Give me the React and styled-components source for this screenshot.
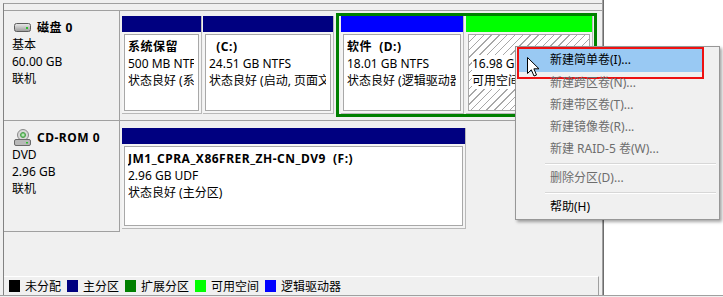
import styled, { createGlobalStyle } from "styled-components";

const GlobalStyle = createGlobalStyle`
  body {
    margin: 0;
    background: #f0f0f0;
    font-family: "Noto Sans", "Noto Sans CJK SC", sans-serif;
    font-size: 12px;
    color: #000;
  }
  * { box-sizing: border-box; }
`;

const legend = [
  { color: "#000000", label: "未分配" },
  { color: "#000080", label: "主分区" },
  { color: "#008000", label: "扩展分区" },
  { color: "#00ff00", label: "可用空间" },
  { color: "#0000ff", label: "逻辑驱动器" },
];

const menu = [
  { label: "新建简单卷(I)...", active: true },
  { label: "新建跨区卷(N)...", disabled: true },
  { label: "新建带区卷(T)...", disabled: true },
  { label: "新建镜像卷(R)...", disabled: true },
  { label: "新建 RAID-5 卷(W)...", disabled: true },
  { sep: true },
  { label: "删除分区(D)...", disabled: true },
  { sep: true },
  { label: "帮助(H)" },
];

function DiskIcon() {
  return (
    <svg width="17" height="9" viewBox="0 0 17 9">
      <defs>
        <linearGradient id="dk" x1="0" y1="0" x2="0" y2="1">
          <stop offset="0" stopColor="#ececec" />
          <stop offset="1" stopColor="#9a9a9a" />
        </linearGradient>
      </defs>
      <rect x="0.5" y="0.5" width="16" height="8" rx="2" fill="url(#dk)" stroke="#5e5e5e" />
      <rect x="12" y="4" width="2" height="2" fill="#2fbf2f" />
    </svg>
  );
}

function CdIcon() {
  return (
    <svg width="17" height="17" viewBox="0 0 17 17">
      <circle cx="9" cy="6" r="5.5" fill="#d8d8d8" stroke="#8a8a8a" />
      <circle cx="9" cy="6" r="2.5" fill="#7fd07f" stroke="#4a9a4a" />
      <circle cx="9" cy="6" r="0.8" fill="#fff" />
      <rect x="0.5" y="10.5" width="16" height="6" rx="1.5" fill="#b8b8b8" stroke="#6a6a6a" />
      <rect x="12" y="13" width="2" height="1.5" fill="#2fbf2f" />
    </svg>
  );
}

function Cursor() {
  return (
    <svg width="13" height="20" viewBox="0 0 13 20">
      <path
        d="M0.5 0.5 L0.5 16.5 L4.3 12.8 L7 19 L9.5 18 L6.9 11.8 L12 11.8 Z"
        fill="#fff"
        stroke="#000"
        strokeLinejoin="round"
      />
    </svg>
  );
}

export default function App() {
  return (
    <>
      <GlobalStyle />
      <Window>
        <LeftPane>
          <GraphView>
            <DiskRow h={111} first>
              <LabelCell>
                <Title><DiskIcon />磁盘 0</Title>
                <Line>基本</Line>
                <Line>60.00 GB</Line>
                <Line>联机</Line>
              </LabelCell>
              <PartArea top={2}>
                <Partition w={80} h={98} ml={2} primary>
                  <Header color="#000080" />
                  <Body>
                    <Inner>
                      <Clip>
                        <b>系统保留</b>
                        <Line>500 MB NTFS</Line>
                        <Line>状态良好 (系统, 活动, 主分区)</Line>
                      </Clip>
                    </Inner>
                  </Body>
                </Partition>
                <Partition w={131} h={98} ml={1} primary>
                  <Header color="#000080" />
                  <Body>
                    <Inner>
                      <Clip>
                        <b>{"  (C:)"}</b>
                        <Line>24.51 GB NTFS</Line>
                        <Line>状态良好 (启动, 页面文件, 故障转储, 主分区)</Line>
                      </Clip>
                    </Inner>
                  </Body>
                </Partition>
                <Extended>
                  <Partition w={123} h={98}>
                    <Header color="#0000ff" />
                    <Body>
                      <Inner>
                        <Clip>
                          <b>{"软件  (D:)"}</b>
                          <Line>18.01 GB NTFS</Line>
                          <Line>状态良好 (逻辑驱动器)</Line>
                        </Clip>
                      </Inner>
                    </Body>
                  </Partition>
                  <Partition w={127} h={98}>
                    <Header color="#00ff00" />
                    <Body>
                      <Inner hatched>
                        <Clip>
                          <Line>&nbsp;</Line>
                          <Line><Plate>16.98 GB</Plate></Line>
                          <Line><Plate>可用空间</Plate></Line>
                        </Clip>
                      </Inner>
                    </Body>
                  </Partition>
                </Extended>
              </PartArea>
            </DiskRow>

            <DiskRow h={112}>
              <LabelCell bottom>
                <Title><CdIcon />CD-ROM 0</Title>
                <Line>DVD</Line>
                <Line>2.96 GB</Line>
                <Line>联机</Line>
              </LabelCell>
              <PartArea top={4}>
                <Partition w={344} h={101} ml={2} primary>
                  <Header color="#000080" />
                  <Body>
                    <Inner>
                      <Clip>
                        <b>{"JM1_CPRA_X86FRER_ZH-CN_DV9  (F:)"}</b>
                        <Line>2.96 GB UDF</Line>
                        <Line>状态良好 (主分区)</Line>
                      </Clip>
                    </Inner>
                  </Body>
                </Partition>
              </PartArea>
            </DiskRow>

            <Legend>
              {legend.map((item) => (
                <LegendItem key={item.label}>
                  <Swatch color={item.color} />
                  {item.label}
                </LegendItem>
              ))}
            </Legend>
          </GraphView>
        </LeftPane>
        <RightPane />

        <Menu>
          {menu.map((item, i) =>
            item.sep ? (
              <Separator key={i} />
            ) : (
              <MenuItem key={i} disabled={item.disabled} active={item.active}>
                {item.label}
              </MenuItem>
            )
          )}
        </Menu>
        <CursorWrap>
          <Cursor />
        </CursorWrap>
      </Window>
    </>
  );
}

const Window = styled.div`
  position: relative;
  display: flex;
  width: 723px;
  height: 296px;
  overflow: hidden;
  border-bottom: 1px solid #a0a0a0;
`;

const LeftPane = styled.div`
  width: 602px;
  padding: 3px 0 0 3px;
  display: flex;
  flex-direction: column;
`;

const GraphView = styled.div`
  flex: 1;
  display: flex;
  flex-direction: column;
  padding-top: 6px;
  border-left: 1px solid #828282;
  border-top: 1px solid #a0a0a0;
`;

const DiskRow = styled.div`
  display: flex;
  height: ${(p) => p.h}px;
  border-top: ${(p) => (p.first ? "1px solid #a0a0a0" : "none")};
  border-bottom: ${(p) => (p.first ? "1px solid #a0a0a0" : "none")};
`;

const LabelCell = styled.div`
  width: 116px;
  flex-shrink: 0;
  padding: 7px 0 0 8px;
  border-right: 1px solid #a0a0a0;
  border-bottom: ${(p) => (p.bottom ? "1px solid #a0a0a0" : "none")};
  height: ${(p) => (p.bottom ? "111px" : "auto")};
  line-height: 17px;
`;

const Title = styled.div`
  display: flex;
  align-items: center;
  gap: 6px;
  height: 18px;
  padding-left: 2px;
  font-weight: bold;
  letter-spacing: 0.5px;
`;

const Line = styled.div`
  line-height: 17px;
  white-space: pre;
`;

const PartArea = styled.div`
  flex: 1;
  display: flex;
  align-items: flex-start;
  padding-top: ${(p) => p.top}px;
`;

const Partition = styled.div`
  display: flex;
  flex-direction: column;
  flex-shrink: 0;
  width: ${(p) => p.w}px;
  height: ${(p) => p.h}px;
  margin-left: ${(p) => p.ml || 0}px;
  margin-top: ${(p) => (p.primary ? 3 : 0)}px;
  border-right: 1px solid #b9b9b9;
  border-bottom: 1px solid #b9b9b9;
`;

const Header = styled.div`
  height: 16px;
  flex-shrink: 0;
  background: ${(p) => p.color};
`;

const Body = styled.div`
  flex: 1;
  min-height: 0;
  padding: 2px;
  background: #f4f4f4;
`;

const Inner = styled.div`
  height: 100%;
  padding: 3px 4px 0 3px;
  border: 1px solid #a8a8a8;
  background: ${(p) =>
    p.hatched
      ? "repeating-linear-gradient(135deg, #ffffff 0px, #ffffff 4.5px, #a8a8a8 4.5px, #a8a8a8 5.5px)"
      : "#ffffff"};
`;

const Clip = styled.div`
  height: 100%;
  overflow: hidden;
  white-space: pre;
  line-height: 17px;

  & b {
    display: block;
    line-height: 17px;
    letter-spacing: 0.5px;
  }
`;

const Plate = styled.span`
  background: #ffffff;
  padding-right: 2px;
`;

const Extended = styled.div`
  display: flex;
  gap: 2px;
  flex-shrink: 0;
  width: 261px;
  height: 104px;
  margin-left: 2px;
  padding: 0 1px 0 2px;
  border: 3px solid #008000;
`;

const Legend = styled.div`
  margin-top: auto;
  display: flex;
  align-items: center;
  width: 595px;
  height: 19px;
  padding-left: 5px;
  border-top: 1px solid #ffffff;
  border-right: 1px solid #a0a0a0;
  line-height: 17px;
`;

const LegendItem = styled.div`
  display: flex;
  align-items: center;
  gap: 5px;
  margin-right: 6px;
`;

const Swatch = styled.span`
  width: 11px;
  height: 12px;
  background: ${(p) => p.color};
`;

const RightPane = styled.div`
  flex: 1;
  background: #ffffff;
  border-left: 1px solid #a0a0a0;
  box-shadow: inset 1px 0 0 #6d6d6d;
`;

const Menu = styled.div`
  position: absolute;
  left: 515px;
  top: 46px;
  width: 205px;
  padding: 1px;
  background: #f0f0f0;
  border: 1px solid #979797;
  box-shadow: 2px 2px 3px rgba(0, 0, 0, 0.35);
`;

const MenuItem = styled.div`
  position: relative;
  height: ${(p) => (p.active ? 24 : 22)}px;
  line-height: ${(p) => (p.active ? 24 : 22)}px;
  width: ${(p) => (p.active ? "187px" : "auto")};
  padding-left: 33px;
  white-space: pre;
  color: ${(p) => (p.disabled ? "#6d6d6d" : "#000")};
  background: ${(p) => (p.active ? "#99c9f3" : "transparent")};

  &::after {
    content: "";
    display: ${(p) => (p.active ? "block" : "none")};
    position: absolute;
    left: 0;
    right: 0;
    top: -1px;
    height: 28px;
    border: 2px solid #ee1111;
  }
`;

const Separator = styled.div`
  height: 2px;
  margin: 3px 2px 2px 28px;
  border-top: 1px solid #d7d7d7;
  border-bottom: 1px solid #ffffff;
`;

const CursorWrap = styled.div`
  position: absolute;
  left: 527px;
  top: 57px;
  width: 13px;
  height: 20px;
  & svg { display: block; }
`;
